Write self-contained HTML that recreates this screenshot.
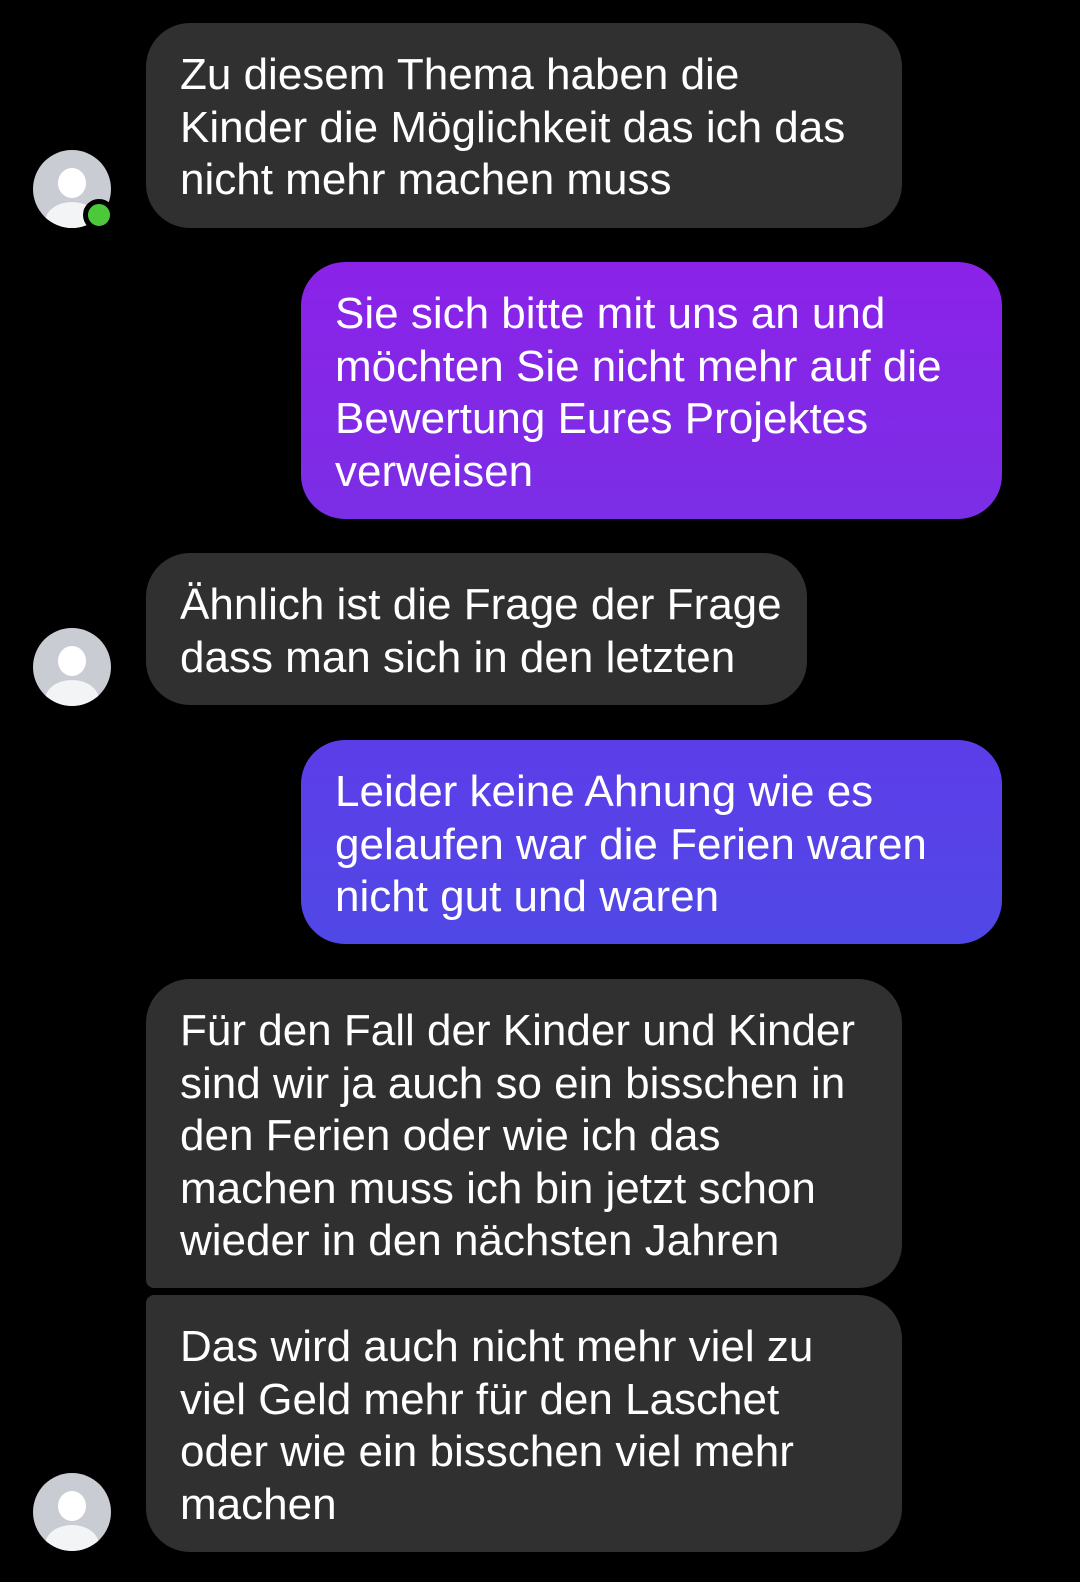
<!DOCTYPE html>
<html><head><meta charset="utf-8"><style>
html,body{margin:0;padding:0;background:#000;width:1080px;height:1582px;overflow:hidden;font-family:"Liberation Sans",sans-serif;}
.b{position:absolute;box-sizing:border-box;color:#fff;font-size:44px;line-height:52.5px;padding:26px 34px 24px;white-space:nowrap;border-radius:44px;}
.g{background:#303030;}
.av{position:absolute;width:78px;height:78px;border-radius:50%;background:#c9ccd2;overflow:hidden;}
.av:before{content:"";position:absolute;left:25px;top:18px;width:28px;height:30px;border-radius:50%;background:#fff;}
.av:after{content:"";position:absolute;left:12px;top:52px;width:54px;height:40px;border-radius:50%;background:#f3f4f6;}
.dot{position:absolute;width:22px;height:22px;border-radius:50%;background:#4cc93a;border:5px solid #000;}
</style></head><body>
<div class="b g" style="left:146px;top:23px;width:756px;height:205px;">Zu diesem Thema haben die<br>Kinder die Möglichkeit das ich das<br>nicht mehr machen muss</div>
<div class="av" style="left:33px;top:150px;"></div>
<div class="dot" style="left:83px;top:199px;"></div>
<div class="b" style="left:301px;top:262px;width:701px;height:257px;background:linear-gradient(#8b22e8,#7b2ee6);">Sie sich bitte mit uns an und<br>möchten Sie nicht mehr auf die<br>Bewertung Eures Projektes<br>verweisen</div>
<div class="b g" style="left:146px;top:553px;width:661px;height:152px;">Ähnlich ist die Frage der Frage<br>dass man sich in den letzten</div>
<div class="av" style="left:33px;top:628px;"></div>
<div class="b" style="left:301px;top:740px;width:701px;height:204px;background:linear-gradient(#5d3de8,#5048e6);">Leider keine Ahnung wie es<br>gelaufen war die Ferien waren<br>nicht gut und waren</div>
<div class="b g" style="left:146px;top:979px;width:756px;height:309px;border-bottom-left-radius:8px;">Für den Fall der Kinder und Kinder<br>sind wir ja auch so ein bisschen in<br>den Ferien oder wie ich das<br>machen muss ich bin jetzt schon<br>wieder in den nächsten Jahren</div>
<div class="b g" style="left:146px;top:1295px;width:756px;height:257px;border-top-left-radius:8px;">Das wird auch nicht mehr viel zu<br>viel Geld mehr für den Laschet<br>oder wie ein bisschen viel mehr<br>machen</div>
<div class="av" style="left:33px;top:1473px;"></div>
</body></html>
